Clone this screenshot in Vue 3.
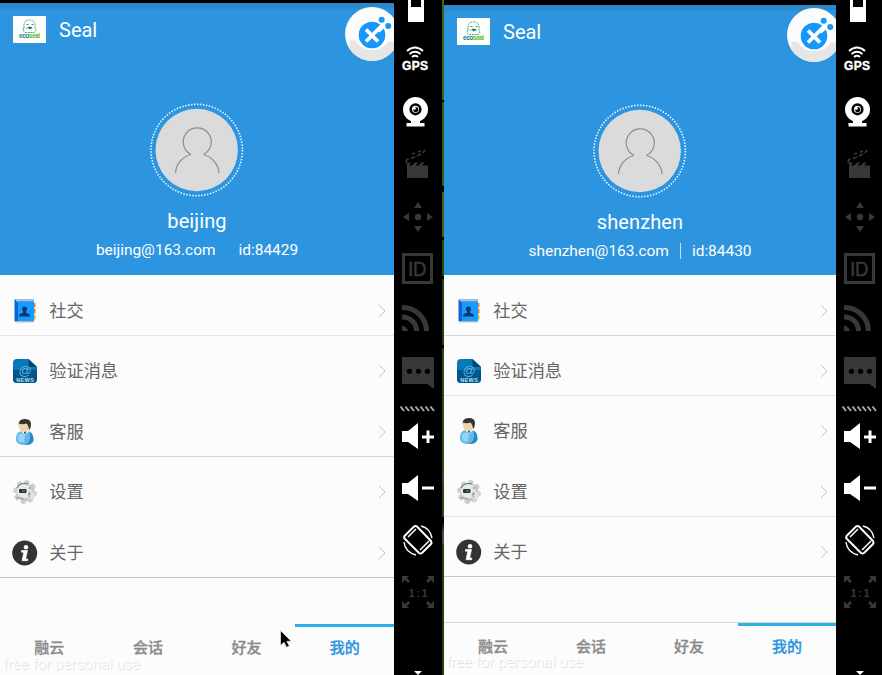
<script setup>
const items = [
  { icon: 'book', label: '社交' },
  { icon: 'news', label: '验证消息' },
  { icon: 'agent', label: '客服' },
  { icon: 'gear', label: '设置' },
  { icon: 'info', label: '关于' },
]
const tabs = ['融云', '会话', '好友', '我的']
const devices = [
  { id: 'one', name: 'beijing', email: 'beijing@163.com', uid: 'id:84429' },
  { id: 'two', name: 'shenzhen', email: 'shenzhen@163.com', uid: 'id:84430' },
]
const teeth = [0, 45, 90, 135, 180, 225, 270, 315]
</script>

<template>
  <main class="desk">
    <template v-for="d in devices" :key="d.id">
      <section class="phone" :class="d.id">
        <header class="hero">
          <div class="appbar">
            <svg class="logo" viewBox="0 0 33 27">
              <rect width="33" height="27" fill="#fcfffc" />
              <g fill="none" stroke="#4aa783" stroke-width="1" stroke-dasharray="2 .7">
                <path d="M11 12V8Q12 4 16.500 4T22 8v4M11 12q-2 3 1 4.500h9q3-1.500 1-4.500M13 13q3-4 7 0" />
              </g>
              <path d="M13.500 8.500h2M18.500 8.500h2M15 11.500h4l-2 1.600z" fill="#176b55" stroke="#176b55" stroke-width=".8" />
              <text x="6" y="22.300" textLength="21" class="brand"><tspan fill="#148077">eco</tspan><tspan fill="#62b52e">seal</tspan></text>
            </svg>
            <span class="title">Seal</span>
          </div>
          <svg class="avatar" viewBox="0 0 94 94">
            <circle cx="46.700" cy="47" r="45.700" fill="none" stroke="#e6f6ff" stroke-width="1.600" stroke-dasharray="1.500 1.490" />
            <circle cx="46.700" cy="47" r="41.200" fill="#dbdbdb" />
            <path d="M41 51.500a14 14 0 1 1 12.500 0M41 51.500C32 54 26 61 25.500 70M53.500 51.500C62 54 68.500 61 69 70" fill="none" stroke="#8d8d8d" stroke-width="1.200" />
          </svg>
          <div class="name">{{ d.name }}</div>
          <div class="meta"><span class="email">{{ d.email }}</span><i class="bar"></i><span class="uid">{{ d.uid }}</span></div>
          <svg class="float" viewBox="0 0 54 54">
            <circle cx="27" cy="27" r="27" fill="#fcfcfc" />
            <path d="M4.500 33.500h6Q15 43 27 43t16.500-8.500h9.400A27 27 0 0 1 4.500 41.800z" fill="#e6e6e6" />
            <circle cx="27" cy="28" r="15" fill="#fff" />
            <circle cx="27" cy="28" r="13.300" fill="#1597fb" />
            <path d="M21 22.500l12 12M21 34.500l21-21" stroke="#fff" stroke-width="3.800" />
            <path d="M33 24l10-9" stroke="#fff" stroke-width="4" />
            <circle cx="36.700" cy="12.700" r="3" fill="#1597fb" />
            <circle cx="43.200" cy="19" r="3" fill="#1597fb" />
          </svg>
        </header>

        <ul class="list">
          <li v-for="it in items" :key="it.icon" class="row">
            <svg class="icon" viewBox="0 0 26 26">
              <g v-if="it.icon === 'book'">
                <path d="M21 5h2.500v4.500H21z" fill="#f58220" />
                <path d="M21 11h2.500v4.500H21z" fill="#ef7a1a" />
                <path d="M21 17h2.500v4.500H21z" fill="#9bd629" />
                <path d="M2.500 1.500H22v22H2.500z" fill="#0f63d6" />
                <path d="M4 1.500h18v2H4z" fill="#a9c4e4" />
                <path d="M6 4h16v19H6z" fill="#189bff" />
                <path d="M3 23.500h18v1H3z" fill="#b9c6d6" />
                <circle cx="12.500" cy="11" r="2.500" fill="#063a6d" />
                <path d="M11 12.500h3v2.500q4 0 4 3.500H7q0-3.500 4-3.500z" fill="#063a6d" />
              </g>
              <g v-else-if="it.icon === 'news'">
                <path d="M5 1h11.500l8.500 8v12q0 4-4 4H5q-4 0-4-4V5q0-4 4-4z" fill="#0878b8" />
                <path d="M1 12h24v9q0 4-4 4H5q-4 0-4-4z" fill="#035489" />
                <path d="M16.500 1L25 9h-8.500z" fill="#024574" />
                <text x="13" y="16.600" class="at">@</text>
                <text x="4.200" y="24.200" textLength="17.600" class="newsword">NEWS</text>
              </g>
              <g v-else-if="it.icon === 'agent'">
                <path d="M4 21Q3.500 13 9.500 12h7q5 1 5 9 0 5-8.500 5T4 21z" fill="#62b9e9" />
                <path d="M17.500 13q4 2 4 8-1 5-8.500 5 7-3 4.500-13z" fill="#2588c6" />
                <ellipse cx="9.500" cy="19" rx="3.500" ry="4.500" fill="#91d5f7" />
                <path d="M9 12l4 4 4-4-2-2h-4z" fill="#fff" />
                <path d="M11.500 12h3l-1 3h-1z" fill="#394a59" />
                <ellipse cx="12.300" cy="7" rx="5.400" ry="6" fill="#f0d2ad" />
                <path d="M6.500 6Q6.500 0 12.500 0q6.500 0 6.500 5 0 4-2 6-.500-5-2.500-6.500Q9.500 6 7.500 4.500z" fill="#35322f" />
                <circle cx="12.500" cy="20.500" r=".6" fill="#c77" />
              </g>
              <g v-else-if="it.icon === 'gear'">
                <rect v-for="a in teeth" :key="a" x="10" y="1" width="5.500" height="6" rx="2" fill="#d0d0d0" :transform="`rotate(${a + 12} 13 13)`" />
                <circle cx="13" cy="13" r="9.300" fill="#c6c6c6" />
                <circle cx="12" cy="12" r="7.500" fill="#e8e8e8" />
                <circle cx="19" cy="16.500" r="4" fill="#e2e2e2" />
                <path d="M5 9Q8 3 16 5" fill="none" stroke="#707070" stroke-width="1.200" />
                <path d="M4 19q4-1 8 1M17.500 13q-2 3 .5 6" fill="none" stroke="#9a9a9a" />
                <rect x="7" y="10" width="7.500" height="4" rx="1" fill="#29343a" />
                <path d="M10 11.500h3v1h-3z" fill="#35a7cf" />
                <path d="M17 9h1.500M17 15h1.500" stroke="#555" />
              </g>
              <g v-else>
                <circle cx="12.700" cy="13" r="12.500" fill="#333" />
                <circle cx="14" cy="7.300" r="2.200" fill="#fff" />
                <path d="M9.500 10.500h6l-1.900 8.500h2.100v1.700h-5.600l1.700-8.500H9.500z" fill="#fff" stroke="#fff" stroke-width=".7" />
              </g>
            </svg>
            <span class="label">{{ it.label }}</span>
            <svg class="chev" viewBox="0 0 8 14"><path d="M1 1l6 6-6 6" fill="none" stroke="#c6c6c6" /></svg>
          </li>
        </ul>

        <nav class="tabs">
          <div v-for="(t, i) in tabs" :key="t" class="tab" :class="{ on: i === 3 }">{{ t }}</div>
        </nav>
        <div class="mark">free for personal use</div>
      </section>

      <aside class="tools" :class="d.id">
        <svg viewBox="0 0 48 24" class="h24"><path d="M14 0h16v22H14z" fill="#fff" /><path d="M17 0h10v7H17z" fill="#000" /></svg>
        <svg viewBox="0 24 48 56" class="h56">
          <path d="M13 51q8-7 16 0M15.500 54q5.500-4.500 11 0M18 57q3-2.500 6 0" fill="none" stroke="#fff" stroke-width="1.800" />
          <text x="8" y="70" textLength="26" class="gps">GPS</text>
        </svg>
        <svg viewBox="0 80 48 56" class="h56">
          <circle cx="21.500" cy="109.500" r="12.500" fill="#fff" />
          <path d="M12.500 123h18v3.500h-18zM17 120h9v4h-9z" fill="#fff" />
          <circle cx="21.500" cy="109.300" r="4.800" fill="#fff" stroke="#000" stroke-width="2.600" />
          <circle cx="21.700" cy="109.500" r="2.600" fill="#000" /><circle cx="20.300" cy="108.300" r="1.500" fill="#fff" />
        </svg>
        <svg viewBox="0 136 48 56" class="h56">
          <path d="M13 162.500h4l-2 3h3l3-3h3.500l-3 3h3l3-3h3l-2.500 3h6V178H13z" fill="#383838" />
          <path d="M12 160l2.500-1M17 158.500l4-1.500M23 156l4-2M12 163l1-4M18 154l3-1M24 152l3-1M29 153l2-3" stroke="#383838" stroke-width="1.700" />
        </svg>
        <svg viewBox="0 192 48 52" class="h52">
          <path d="M24 202l4 6h-8zM24 232l4-6h-8zM9 217l6-4v8zM39 217l-6-4v8z" fill="#383838" /><circle cx="24" cy="217" r="3.200" fill="#383838" />
        </svg>
        <svg viewBox="0 244 48 50" class="h50">
          <rect x="9.500" y="254.500" width="28" height="28" fill="none" stroke="#383838" stroke-width="3" />
          <text x="14" y="276" class="idtext">I</text>
          <text x="19" y="276" textLength="13.500" lengthAdjust="spacingAndGlyphs" class="idtext">D</text>
        </svg>
        <svg viewBox="0 294 48 52" class="h52">
          <path d="M8 307.500A24 24 0 0 1 32.500 331M8 317A14 14 0 0 1 22.500 331" fill="none" stroke="#383838" stroke-width="5" />
          <path d="M8 325.500q5 1 6 5.500H8z" fill="#383838" />
        </svg>
        <svg viewBox="0 346 48 52" class="h52">
          <path d="M8 357h32v32l-6.500-5H8z" fill="#383838" />
          <circle cx="15.500" cy="371.300" r="2.600" /><circle cx="24.500" cy="371.300" r="2.600" /><circle cx="33.500" cy="371.300" r="2.600" />
        </svg>
        <svg viewBox="0 398 48 18" class="h18">
          <path d="M6.500 406.500l3.500 4.500M11.500 406.500l3.500 4.500M16.500 406.500l3.500 4.500M21.500 406.500l3.500 4.500M26.500 406.500l3.500 4.500M31.500 406.500l3.500 4.500M36.500 406.500l3.500 4.500" stroke="#aaa" stroke-width="1.900" />
        </svg>
        <svg viewBox="0 416 48 46" class="h46">
          <path d="M8 431h6l10-8v26l-10-7H8zM28 435.500h12v3H28zM32.500 430.500h3v12.500h-3z" fill="#fff" />
        </svg>
        <svg viewBox="0 462 48 52" class="h52">
          <path d="M8 483h6l10-8v26l-10-7H8zM28 486.500h12v3H28z" fill="#fff" />
        </svg>
        <svg viewBox="0 514 48 52" class="h52">
          <g fill="none" stroke="#fff">
            <path d="M10.500 536L20 526.500q1.500-1 3 0L37 541q1 1.500 0 3l-9 9q-1.500 1-3 0L11 539q-1.500-1.500-.500-3z" stroke-width="2" />
            <path d="M14 537l8-8M26 550l9-9" stroke-width="1.500" />
            <path d="M27 526q9 2 11 12M10 542q1 10 12 13" stroke-width="1.400" />
          </g>
        </svg>
        <svg viewBox="0 566 48 64" class="h64">
          <path d="M8 576h7l-2 2 3 3-2 2-3-3-3 3zM40 576h-7l2 2-3 3 2 2 3-3 3 3zM8 608h7l-2-2 3-3-2-2-3 3-3-3zM40 608h-7l2-2-3-3 2-2 3 3 3-3z" fill="#383834" />
          <text x="14.500" y="596.500" textLength="19" class="ratio">1:1</text>
        </svg>
        <svg viewBox="0 630 48 45" class="h45"><path d="M20 671h8l-4 4z" fill="#fff" /></svg>
      </aside>
      <div v-if="d.id === 'one'" class="seam"></div>
    </template>
    <svg class="cursor" viewBox="0 0 14 20">
      <path d="M1.500 1.500v15l3.600-3.200 2.400 5 2.800-1.300-2.500-4.700h4.500z" fill="#000" stroke="#e2e2e2" stroke-width=".8" />
    </svg>
  </main>
</template>

<style>
body { margin: 0; background: #000; }
</style>

<style scoped>
.desk { position: relative; display: flex; width: 882px; height: 675px; overflow: hidden; background: #000; font-family: Roboto, "Noto Sans CJK SC", sans-serif; }
.phone { position: relative; box-sizing: border-box; display: flex; flex-direction: column; height: 675px; overflow: hidden; background: #fcfcfc; }
.phone.one { width: 394px; border-top: 3px solid #000; }
.phone.two { width: 392px; border-top: 5px solid #000; }
.hero { position: relative; box-sizing: border-box; display: flex; flex-direction: column; align-items: center; flex: none; color: #fff; background: linear-gradient(#2a86c8 0, #2b8bcf 5px, #2d95df 7px); }
.one .hero { height: 272px; }
.two .hero { height: 270px; }
.appbar { display: flex; align-items: center; align-self: stretch; height: 52px; padding-left: 13px; gap: 13px; flex: none; }
.logo { width: 33px; height: 27px; }
.brand { font: 700 6.500px "Liberation Sans", sans-serif; }
.title { font-size: 20px; line-height: 24px; padding-top: 1px; }
.avatar { width: 94px; height: 94px; margin-top: 48px; flex: none; }
.two .avatar { margin-top: 46.500px; }
.name { font-size: 20px; line-height: 24px; margin-top: 12px; letter-spacing: .1px; }
.meta { display: flex; align-items: center; font-size: 15.450px; line-height: 20px; margin-top: 7px; }
.bar { width: 1px; height: 16px; margin: 0 11px; background: transparent; }
.two .bar { background: #e3d9cf; }
.float { position: absolute; top: 4px; right: -5px; width: 54px; height: 54px; }
.two .float { top: 3px; }

.list { display: flex; flex-direction: column; margin: 0; padding: 0; list-style: none; flex: none; }
.row { box-sizing: border-box; display: flex; align-items: center; height: 60px; padding: 11px 8px 0 12px; border-bottom: 1px solid transparent; }
.one .row:nth-child(odd) { height: 61px; }
.two .row:nth-child(1), .two .row:nth-child(4) { height: 61px; }
.one .row:nth-child(1) { border-color: #e3e3e3; }
.one .row:nth-child(3) { border-color: #d6d6d6; }
.one .row:nth-child(5), .two .row:nth-child(5) { border-color: #c6c6c6; }
.two .row:nth-child(1) { border-color: #d8d8d8; }
.two .row:nth-child(2), .two .row:nth-child(4) { border-color: #e5e5e5; }
.icon { width: 26px; height: 26px; }
.at { font: 13px "Liberation Sans", sans-serif; fill: #58b6df; text-anchor: middle; }
.newsword { font: 700 5.500px "Liberation Sans", sans-serif; fill: #b6e1f5; }
.label { flex: 1; margin-left: 11.300px; font-size: 17.200px; line-height: 24px; color: #656565; }
.chev { width: 8px; height: 14px; }

.tabs { display: flex; height: 52px; margin-top: auto; flex: none; box-sizing: border-box; }
.two .tabs { height: 53px; border-top: 1px solid #d6d6d6; }
.tab { flex: 1; box-sizing: border-box; border-top: 3px solid transparent; text-align: center; padding-top: 11px; font-size: 15px; font-weight: 500; line-height: 20px; color: #8b8b8b; -webkit-text-stroke: .3px currentColor; }
.one .tab { margin-top: 1px; }
.tab.on { color: #2d95df; border-top-color: #2bb1e5; }
.one .tab.on { margin-left: -.5px; }
.mark { position: absolute; left: 3px; bottom: 3px; font-size: 15.200px; line-height: 16px; font-weight: 300; color: #fff; text-shadow: 1px 1px 0 #dedede; white-space: nowrap; }
.two .mark { left: 2px; bottom: 5px; }

.tools { display: flex; flex-direction: column; width: 48px; flex: none; background: #000; overflow: hidden; }
.tools.two { width: 46px; }
.tools svg { display: block; width: 48px; flex: none; }
.h18 { height: 18px; } .h24 { height: 24px; } .h45 { height: 45px; } .h46 { height: 46px; }
.h50 { height: 50px; } .h52 { height: 52px; } .h56 { height: 56px; } .h64 { height: 64px; }
.gps { font: 700 12px "Liberation Sans", sans-serif; fill: #fff; stroke: #fff; stroke-width: .4px; }
.idtext { font: 19.500px "Liberation Sans", sans-serif; fill: #383838; stroke: #383838; stroke-width: .5px; }
.ratio { font: 700 11px "Liberation Sans", sans-serif; fill: #383838; }
.seam { width: 2px; flex: none; background: linear-gradient(#41621b 0 100px, #000 100px 102px, #35591a 102px 186px, #000 186px 192px, #4a5d10 192px 237px, #000 237px 240px, #274b0b 240px 276px, #000 276px 279px, #23400b 279px 345px, #000 345px 348px, #2d4a0e 348px 474px, #454040 474px 484px, #294712 484px 517px, #000 517px 522px, #4b4b4b 532px 544px, #233f0b 544px); }
.cursor { position: absolute; left: 279px; top: 629px; width: 14px; height: 20px; }
</style>
